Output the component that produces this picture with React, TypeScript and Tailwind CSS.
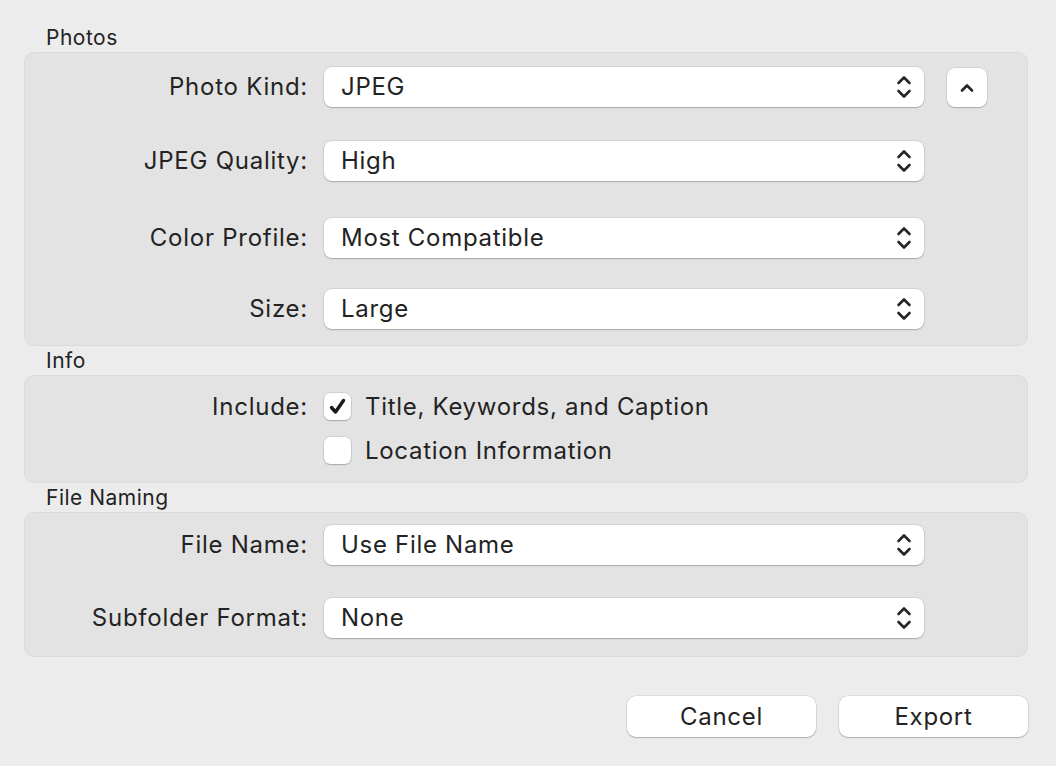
import React from "react";

const font = { fontFamily: "Inter, 'Noto Sans', 'Liberation Sans', sans-serif" };

function UpDown() {
  return (
    <svg width="16" height="26" viewBox="0 0 16 26" fill="none">
      <path d="M2.5 9 L8 3.5 L13.5 9" stroke="#262626" strokeWidth="2.6" strokeLinecap="round" strokeLinejoin="round" />
      <path d="M2.5 17 L8 22.5 L13.5 17" stroke="#262626" strokeWidth="2.6" strokeLinecap="round" strokeLinejoin="round" />
    </svg>
  );
}

function Select({ value, className = "" }: { value: string; className?: string }) {
  return (
    <div
      className={`flex h-[40px] w-[600px] items-center justify-between rounded-[8px] bg-white pl-[17px] pr-[12px] text-[24px] tracking-[0.7px] text-[#232323] shadow-[0_0_0_0.5px_rgba(0,0,0,0.12),0_1px_1.5px_rgba(0,0,0,0.22)] ${className}`}
    >
      <span className="leading-none">{value}</span>
      <UpDown />
    </div>
  );
}

function Label({ children }: { children: React.ReactNode }) {
  return <div className="w-[283px] shrink-0 text-right text-[24px] leading-none tracking-[0.75px] text-[#232323]">{children}</div>;
}

function Row({ label, value, extra, className = "" }: { label: string; value: string; extra?: React.ReactNode; className?: string }) {
  return (
    <div className={`flex items-center ${className}`}>
      <Label>{label}</Label>
      <div className="ml-[16px]">
        <Select value={value} />
      </div>
      {extra}
    </div>
  );
}

function Heading({ children }: { children: React.ReactNode }) {
  return <div className="flex h-[29px] items-center pl-[22px] text-[21px] tracking-[0.5px] text-[#232323]">{children}</div>;
}

function Checkbox({ checked }: { checked?: boolean }) {
  return (
    <div className="flex h-[27px] w-[27px] items-center justify-center rounded-[6px] bg-white shadow-[0_0_0_0.5px_rgba(0,0,0,0.15),0_1px_1.5px_rgba(0,0,0,0.2)]">
      {checked && (
        <svg width="19" height="19" viewBox="0 0 19 19" fill="none">
          <path d="M3.5 10.5 L7.5 15 L15.5 3.5" stroke="#1a1a1a" strokeWidth="3.4" strokeLinecap="round" strokeLinejoin="round" />
        </svg>
      )}
    </div>
  );
}

function Button({ children }: { children: React.ReactNode }) {
  return (
    <div className="flex h-[41px] w-[189px] items-center justify-center rounded-[9px] bg-white text-[24px] tracking-[0.7px] text-[#232323] shadow-[0_0_0_0.5px_rgba(0,0,0,0.12),0_1px_1.5px_rgba(0,0,0,0.22)]">
      {children}
    </div>
  );
}

export default function App() {
  return (
    <div className="h-[766px] w-full bg-[#ececec] pl-[24px] pr-[28px] pt-[23px]" style={font}>
      <Heading>Photos</Heading>
      <div className="rounded-[10px] border border-[#dadada] bg-[#e3e3e3] pb-[16px] pt-[13px]">
        <Row
          label="Photo Kind:"
          value="JPEG"
          extra={
            <div className="ml-[23px] mt-[2px] flex h-[39px] w-[40px] items-center justify-center rounded-[8px] bg-white shadow-[0_0_0_0.5px_rgba(0,0,0,0.12),0_1px_1.5px_rgba(0,0,0,0.22)]">
              <svg width="16" height="10" viewBox="0 0 16 10" fill="none">
                <path d="M3 7.5 L8 2.5 L13 7.5" stroke="#262626" strokeWidth="2.6" strokeLinecap="round" strokeLinejoin="round" />
              </svg>
            </div>
          }
        />
        <Row label="JPEG Quality:" value="High" className="mt-[34px]" />
        <Row label="Color Profile:" value="Most Compatible" className="mt-[37px]" />
        <Row label="Size:" value="Large" className="mt-[31px]" />
      </div>
      <Heading>Info</Heading>
      <div className="rounded-[10px] border border-[#dadada] bg-[#e3e3e3] pb-[18px] pt-[17px]">
        <div className="flex items-center">
          <Label>Include:</Label>
          <div className="ml-[16px] flex items-center">
            <Checkbox checked />
            <span className="ml-[14px] text-[24px] leading-none tracking-[0.7px] text-[#232323]">Title, Keywords, and Caption</span>
          </div>
        </div>
        <div className="mt-[17px] flex items-center">
          <div className="w-[283px] shrink-0" />
          <div className="ml-[16px] flex items-center">
            <Checkbox />
            <span className="ml-[14px] text-[24px] leading-none tracking-[0.7px] text-[#232323]">Location Information</span>
          </div>
        </div>
      </div>
      <Heading>File Naming</Heading>
      <div className="rounded-[10px] border border-[#dadada] bg-[#e3e3e3] pb-[18px] pt-[12px]">
        <Row label="File Name:" value="Use File Name" />
        <Row label="Subfolder Format:" value="None" className="mt-[33px]" />
      </div>
      <div className="mt-[39px] flex justify-end gap-[23px]">
        <Button>Cancel</Button>
        <Button>Export</Button>
      </div>
    </div>
  );
}
